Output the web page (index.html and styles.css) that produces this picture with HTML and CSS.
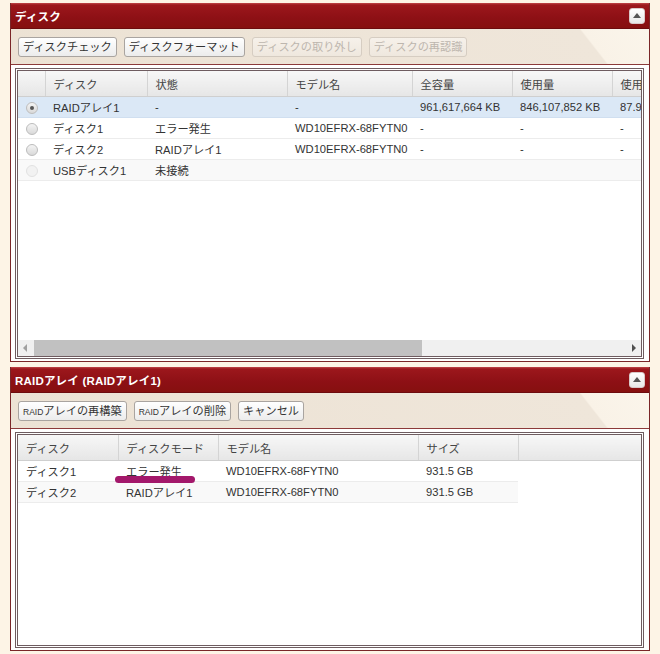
FILE: index.html
```html
<!DOCTYPE html>
<html lang="ja">
<head>
    <meta charset="UTF-8">
    <title>ディスク</title>
    <link rel="stylesheet" href="styles.css">
</head>
<body>
    <div class="panel" id="panel-disk">
        <div class="panel-head">
            <span class="panel-title">ディスク</span>
            <span class="collapse"></span>
        </div>
        <div class="toolbar">
            <div class="button">ディスクチェック</div>
            <div class="button">ディスクフォーマット</div>
            <div class="button disabled">ディスクの取り外し</div>
            <div class="button disabled">ディスクの再認識</div>
        </div>
        <div class="panel-body">
            <div class="grid-box disk-box">
                <div class="grid-scroll">
                    <table class="grid disk-grid">
                        <colgroup>
                            <col style="width: 27px">
                            <col style="width: 102px">
                            <col style="width: 140px">
                            <col style="width: 125px">
                            <col style="width: 100px">
                            <col style="width: 100px">
                            <col style="width: 100px">
                        </colgroup>
                        <thead>
                            <tr>
                                <th></th>
                                <th>ディスク</th>
                                <th>状態</th>
                                <th>モデル名</th>
                                <th>全容量</th>
                                <th>使用量</th>
                                <th>使用率</th>
                            </tr>
                        </thead>
                        <tbody>
                            <tr class="selected">
                                <td><span class="radio checked"></span></td>
                                <td>RAIDアレイ1</td>
                                <td>-</td>
                                <td>-</td>
                                <td>961,617,664 KB</td>
                                <td>846,107,852 KB</td>
                                <td>87.99 %</td>
                            </tr>
                            <tr>
                                <td><span class="radio"></span></td>
                                <td>ディスク1</td>
                                <td>エラー発生</td>
                                <td>WD10EFRX-68FYTN0</td>
                                <td>-</td>
                                <td>-</td>
                                <td>-</td>
                            </tr>
                            <tr>
                                <td><span class="radio"></span></td>
                                <td>ディスク2</td>
                                <td>RAIDアレイ1</td>
                                <td>WD10EFRX-68FYTN0</td>
                                <td>-</td>
                                <td>-</td>
                                <td>-</td>
                            </tr>
                            <tr class="alt">
                                <td><span class="radio disabled"></span></td>
                                <td>USBディスク1</td>
                                <td>未接続</td>
                                <td></td>
                                <td></td>
                                <td></td>
                                <td></td>
                            </tr>
                        </tbody>
                    </table>
                </div>
                <div class="hscroll">
                    <span class="arrow left"></span>
                    <div class="track"><div class="thumb"></div></div>
                    <span class="arrow right"></span>
                </div>
            </div>
        </div>
    </div>

    <div class="panel" id="panel-raid">
        <div class="panel-head">
            <span class="panel-title">RAIDアレイ (RAIDアレイ1)</span>
            <span class="collapse"></span>
        </div>
        <div class="toolbar">
            <div class="button"><small>RAID</small>アレイの再構築</div>
            <div class="button"><small>RAID</small>アレイの削除</div>
            <div class="button">キャンセル</div>
        </div>
        <div class="panel-body">
            <div class="grid-box raid-box">
                <table class="grid raid-grid">
                    <colgroup>
                        <col style="width: 100px">
                        <col style="width: 100px">
                        <col style="width: 200px">
                        <col style="width: 100px">
                        <col>
                    </colgroup>
                    <thead>
                        <tr>
                            <th>ディスク</th>
                            <th>ディスクモード</th>
                            <th>モデル名</th>
                            <th>サイズ</th>
                            <th class="filler"></th>
                        </tr>
                    </thead>
                    <tbody>
                        <tr>
                            <td>ディスク1</td>
                            <td class="marked">エラー発生<span class="mark"></span></td>
                            <td>WD10EFRX-68FYTN0</td>
                            <td>931.5 GB</td>
                        </tr>
                        <tr class="alt">
                            <td>ディスク2</td>
                            <td>RAIDアレイ1</td>
                            <td>WD10EFRX-68FYTN0</td>
                            <td>931.5 GB</td>
                        </tr>
                    </tbody>
                </table>
            </div>
        </div>
    </div>
</body>
</html>
```

FILE: styles.css
```css
html, body {
    height: 100%;
    overflow: hidden;
}

body {
    margin: 0;
    padding: 3px 10px 0 10px;
    background: #fdf4e6;
    font-family: "Liberation Sans", "Noto Sans CJK JP", sans-serif;
    font-size: 11.2px;
    color: #333;
}

.panel {
    border: 1px solid #7a2628;
    border-top: none;
    background: #fff;
}

#panel-raid {
    margin-top: 5px;
}

.panel-head {
    height: 25px;
    display: flex;
    align-items: center;
    justify-content: space-between;
    padding: 0 4px 0 4px;
    background: linear-gradient(#c0474a 0px, #9c171c 2px, #8d1015 60%, #86100f 100%);
    border-bottom: 1px solid #6d0b0e;
}

.panel-title {
    color: #fff;
    font-weight: bold;
    font-size: 11.5px;
    letter-spacing: 0.2px;
}

.collapse {
    position: relative;
    width: 14px;
    height: 14px;
    border-radius: 3px;
    background: linear-gradient(#ffffff, #e8e8e8);
    border: 1px solid #d9c9c9;
}

.collapse::after {
    content: "";
    position: absolute;
    left: 3px;
    top: 4px;
    border-left: 4px solid transparent;
    border-right: 4px solid transparent;
    border-bottom: 5px solid #555;
}

.toolbar {
    height: 35px;
    display: flex;
    align-items: center;
    gap: 7px;
    padding: 0 7px;
    background: linear-gradient(52deg, #ece2d4 0%, #efe6da 89.5%, #f9f2e7 89.8%, #fbf5eb 100%);
    border-bottom: 1px solid #8c3a3a;
}

.button {
    height: 18px;
    line-height: 18px;
    padding: 0 4px;
    border: 1px solid #a9a4a0;
    border-radius: 3px;
    background: linear-gradient(#ffffff, #ececec);
    color: #333;
    white-space: nowrap;
}

.button small {
    font-size: 8.5px;
}

.button.disabled {
    color: #bdb6ae;
    border-color: #d6cdc2;
    background: linear-gradient(#f6f1ea, #efe8de);
}

.panel-body {
    padding: 3px 5px 2px 4px;
    background: #fff;
}

.grid-box {
    border: 3px double #6e5c60;
    background: #fff;
    display: flex;
    flex-direction: column;
}

.disk-box {
    height: 285px;
}

.raid-box {
    height: 210px;
}

.grid-scroll {
    flex: 1;
    overflow: hidden;
}

.grid {
    border-collapse: collapse;
    table-layout: fixed;
}

.disk-grid {
    width: 694px;
}

.raid-grid {
    width: 100%;
}

.grid th {
    height: 25px;
    padding: 0 0 0 8px;
    text-align: left;
    font-weight: normal;
    color: #444;
    background: linear-gradient(#f7f7f7, #e6e6e6);
    border-right: 1px solid #d4d4d4;
    border-bottom: 1px solid #cfcfcf;
    white-space: nowrap;
    overflow: hidden;
}

.grid th.filler {
    border-right: none;
}

.grid td {
    height: 20px;
    padding: 0 0 0 8px;
    border-bottom: 1px solid #ececec;
    white-space: nowrap;
    overflow: hidden;
    background: #fff;
}

.grid tr.alt td {
    background: #f9f9f9;
}

.grid tr.selected td {
    background: #dbe8f6;
    border-bottom-color: #d0dff0;
}

.disk-grid td:first-child,
.disk-grid th:first-child {
    padding: 0;
    text-align: center;
}

.radio {
    display: inline-block;
    width: 12px;
    height: 12px;
    border-radius: 50%;
    border: 1px solid #bdbdbd;
    background: linear-gradient(#f4f4f4, #d9d9d9);
    vertical-align: middle;
    position: relative;
    box-sizing: border-box;
}

.radio.checked::after {
    content: "";
    position: absolute;
    left: 3px;
    top: 3px;
    width: 4px;
    height: 4px;
    border-radius: 50%;
    background: #555;
}

.radio.disabled {
    border-color: #e2e2e2;
    background: #f2f2f2;
}

.hscroll {
    height: 16px;
    display: flex;
    align-items: center;
    background: #f0f0f0;
}

.hscroll .arrow {
    width: 16px;
    height: 16px;
    position: relative;
}

.hscroll .arrow::after {
    content: "";
    position: absolute;
    top: 4px;
    border-top: 4px solid transparent;
    border-bottom: 4px solid transparent;
}

.hscroll .arrow.left::after {
    left: 5px;
    border-right: 4px solid #a0a0a0;
}

.hscroll .arrow.right::after {
    left: 7px;
    border-left: 4px solid #505050;
}

.hscroll .track {
    flex: 1;
    height: 16px;
}

.hscroll .thumb {
    width: 388px;
    height: 16px;
    background: #c1c1c1;
}

.marked {
    position: relative;
    overflow: visible !important;
}

.mark {
    position: absolute;
    left: -3px;
    top: 15px;
    width: 80px;
    height: 7px;
    border-radius: 4px;
    background: #a3186b;
}
```
